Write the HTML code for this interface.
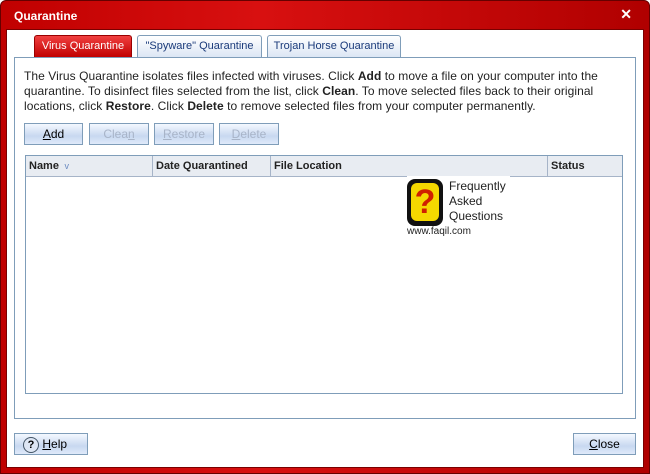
<!DOCTYPE html>
<html><head><style>
*{margin:0;padding:0;box-sizing:border-box}
body{width:650px;height:474px;background:#fff;font-family:"Liberation Sans",sans-serif;position:relative;overflow:hidden}
.win{position:absolute;left:0;top:0;width:650px;height:474px;background:linear-gradient(90deg,#c00000,#d81010 40%,#b00000);border-radius:6px 6px 0 0;border:1px solid #600}
.title{position:absolute;left:14px;top:9px;color:#fff;font-weight:bold;font-size:12px}
.x{position:absolute;right:18px;top:6px;color:#fff;font-weight:bold;font-size:14px}
.inner{position:absolute;left:6px;top:29px;width:638px;height:439px;background:#fff;border:1px solid #7a0000}
.tab{position:absolute;top:35px;height:22px;border:1px solid #7f9db9;border-bottom:none;border-radius:3px 3px 0 0;background:linear-gradient(#fff,#dce6f4);font-size:11px;color:#1a3a7a;text-align:center;line-height:21px}
.tab.a{background:linear-gradient(#f04040,#c00000);color:#fff;border-color:#900}
.panel{position:absolute;left:14px;top:57px;width:622px;height:362px;border:1px solid #7f9db9}
.txt{position:absolute;left:24px;top:69px;font-size:12px;line-height:15px;color:#222;width:612px;letter-spacing:0.06px}
.btn{position:absolute;top:123px;height:22px;border:1px solid #7f9db9;background:linear-gradient(#f4f8ff,#c8d8f0 60%,#e0eafa);font-size:12px;text-align:center;line-height:20px;color:#000}
.btn.d{color:#a8b4c8}
.tbl{position:absolute;left:25px;top:155px;width:598px;height:239px;border:1px solid #7f9db9}
.hd{position:absolute;top:0;height:21px;background:#e8ecf2;border-bottom:1px solid #a6b4c8;border-right:1px solid #a6b4c8;font-size:11px;font-weight:bold;line-height:20px;padding-left:3px;color:#222}
</style></head><body>
<div class="win"></div>
<div class="title">Quarantine</div>
<div class="x">✕</div>
<div class="inner"></div>
<div class="tab a" style="left:34px;width:98px">Virus Quarantine</div>
<div class="tab" style="left:137px;width:125px">"Spyware" Quarantine</div>
<div class="tab" style="left:267px;width:134px">Trojan Horse Quarantine</div>
<div class="panel"></div>
<div class="txt">The Virus Quarantine isolates files infected with viruses. Click <b>Add</b> to move a file on your computer into the quarantine. To disinfect files selected from the list, click <b>Clean</b>. To move selected files back to their original locations, click <b>Restore</b>. Click <b>Delete</b> to remove selected files from your computer permanently.</div>
<div class="btn" style="left:24px;width:59px"><u>A</u>dd</div>
<div class="btn d" style="left:89px;width:60px">Clea<u>n</u></div>
<div class="btn d" style="left:154px;width:60px"><u>R</u>estore</div>
<div class="btn d" style="left:219px;width:60px"><u>D</u>elete</div>
<div class="tbl">
<div class="hd" style="left:0;width:127px">Name <span style="color:#6a8ac0;font-weight:normal;font-size:9px">&nbsp;v</span></div>
<div class="hd" style="left:127px;width:118px">Date Quarantined</div>
<div class="hd" style="left:245px;width:277px">File Location</div>
<div class="hd" style="left:522px;width:74px;border-right:none">Status</div>
</div>
<div style="position:absolute;left:407px;top:176px;width:103px;height:62px;background:#fff">
<div style="position:absolute;left:0;top:3px;width:36px;height:47px;background:#111;border-radius:8px"></div>
<div style="position:absolute;left:4px;top:7px;width:28px;height:38px;background:#f5d800;border-radius:6px;color:#d02000;font-weight:bold;font-size:34px;line-height:38px;text-align:center">?</div>
<div style="position:absolute;left:42px;top:3px;font-size:12px;line-height:15px;color:#222">Frequently<br>Asked<br>Questions</div>
<div style="position:absolute;left:0;top:50px;font-size:10px;color:#222">www.faqil.com</div>
</div>
<div class="btn" style="left:14px;top:433px;width:74px;text-align:left;padding-left:8px"><span style="display:inline-block;width:16px;height:16px;border:1px solid #456;border-radius:50%;text-align:center;line-height:14px;font-size:11px;font-weight:bold;vertical-align:middle;background:#dde6f4">?</span> <u>H</u>elp</div>
<div class="btn" style="left:573px;top:433px;width:63px"><u>C</u>lose</div>
</body></html>
